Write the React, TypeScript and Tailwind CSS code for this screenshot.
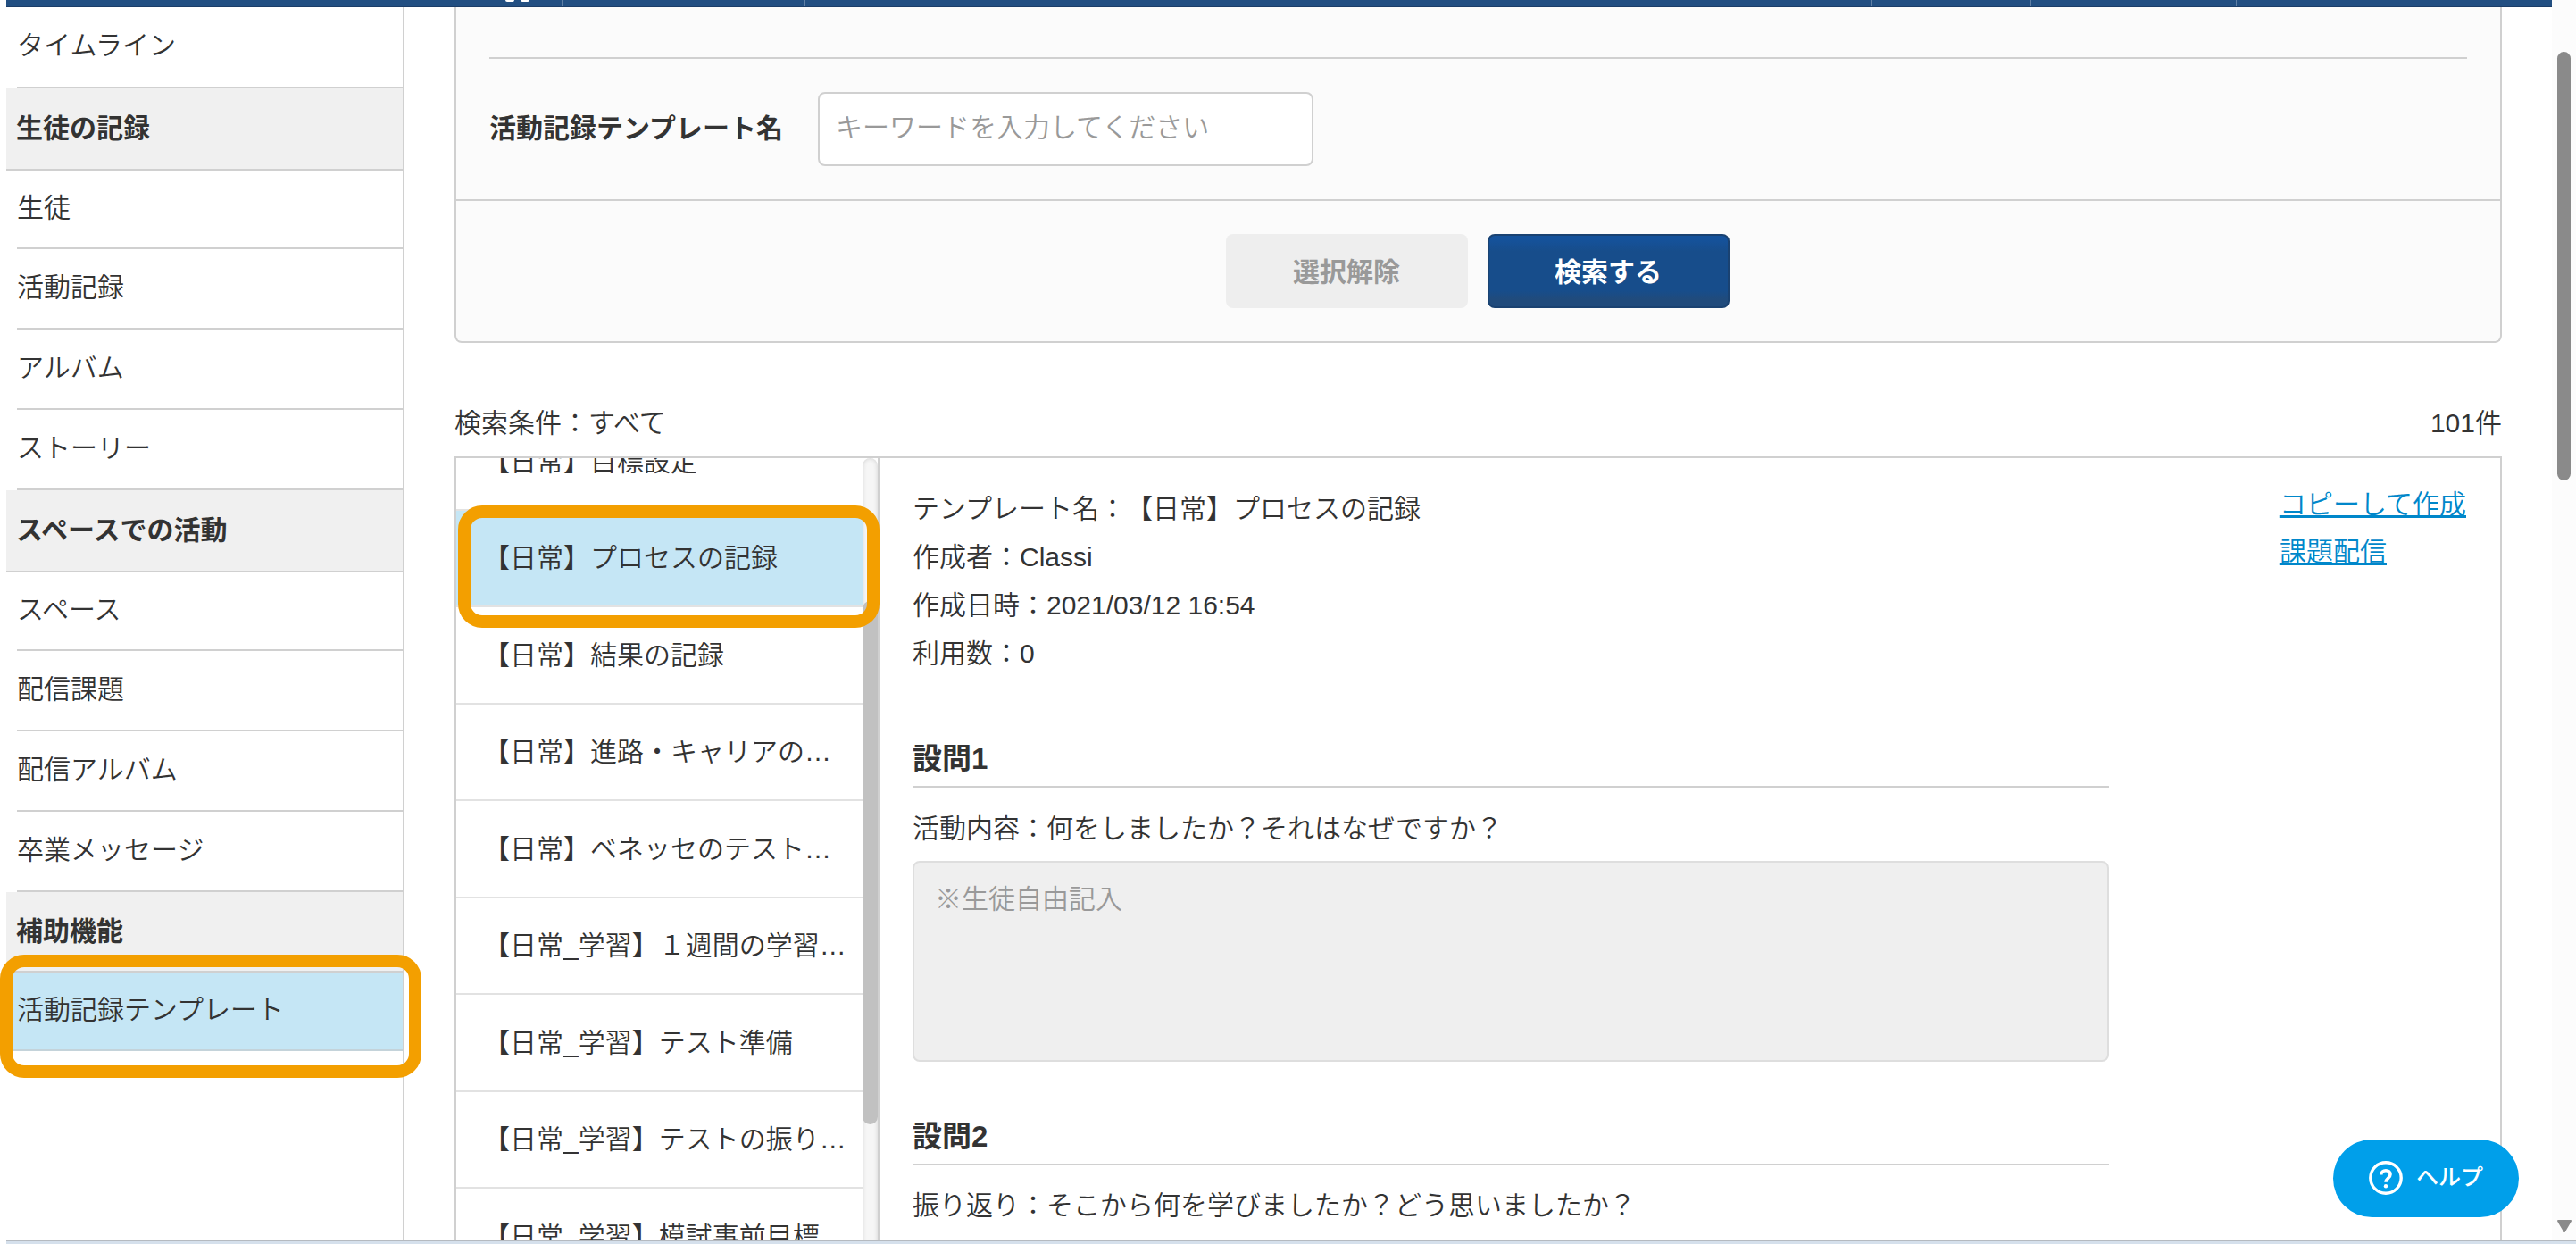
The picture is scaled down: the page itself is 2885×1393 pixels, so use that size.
import React from "react";

type NavItem = {
  label: string;
  kind?: "heading" | "active";
  height: string;
};

const navItems: NavItem[] = [
  { label: "タイムライン", height: "h-[91px]" },
  { label: "生徒の記録", kind: "heading", height: "h-[92px]" },
  { label: "生徒", height: "h-[88px]" },
  { label: "活動記録", height: "h-[90px]" },
  { label: "アルバム", height: "h-[90px]" },
  { label: "ストーリー", height: "h-[90px]" },
  { label: "スペースでの活動", kind: "heading", height: "h-[92px]" },
  { label: "スペース", height: "h-[88px]" },
  { label: "配信課題", height: "h-[90px]" },
  { label: "配信アルバム", height: "h-[90px]" },
  { label: "卒業メッセージ", height: "h-[90px]" },
  { label: "補助機能", kind: "heading", height: "h-[90px]" },
  { label: "活動記録テンプレート", kind: "active", height: "h-[88px]" },
];

const templates = [
  "【日常】目標設定",
  "【日常】プロセスの記録",
  "【日常】結果の記録",
  "【日常】進路・キャリアの…",
  "【日常】ベネッセのテスト…",
  "【日常_学習】１週間の学習…",
  "【日常_学習】テスト準備",
  "【日常_学習】テストの振り…",
  "【日常_学習】模試事前目標",
];

const details = [
  "テンプレート名：【日常】プロセスの記録",
  "作成者：Classi",
  "作成日時：2021/03/12 16:54",
  "利用数：0",
];

const Header = () => (
  <header className="flex h-2 w-[2851px] shrink-0 border-b border-[#1b3d68] bg-[#224f82]">
    <div className="flex w-[623px] justify-end gap-[7px] border-r border-[#5f7fa5] pr-[36px]">
      <span className="h-[2px] w-[10px] rounded-b-full bg-white" />
      <span className="h-[2px] w-[10px] rounded-b-full bg-white" />
    </div>
    <div className="w-[272px] border-r border-[#5f7fa5]" />
    <div className="w-[1194px] border-r border-[#5f7fa5]" />
    <div className="w-[179px] border-r border-[#5f7fa5]" />
    <div className="w-[230px] border-r border-[#5f7fa5]" />
  </header>
);

const Sidebar = () => (
  <nav className="w-[446px] shrink-0 border-r-2 border-[#d0d0d0]">
    {navItems.map((item) => {
      if (item.kind === "heading") {
        return (
          <div
            key={item.label}
            className={`${item.height} flex items-center border-b-2 border-[#d0d0d0] bg-[#f0f0f0] pb-0.5 pl-[11px] font-bold`}
          >
            {item.label}
          </div>
        );
      }
      if (item.kind === "active") {
        return (
          <div
            key={item.label}
            className={`${item.height} flex items-center border-b-2 border-[#c4d3da] bg-[#c5e6f5] pb-[3px] pl-3`}
          >
            {item.label}
          </div>
        );
      }
      return (
        <div key={item.label} className={`${item.height} pl-3`}>
          <div className="flex h-full items-center border-b-2 border-[#d0d0d0] pb-1">
            {item.label}
          </div>
        </div>
      );
    })}
  </nav>
);

const SearchPanel = () => (
  <section className="h-[376px] rounded-b-lg border-2 border-t-0 border-[#d0d0d0] bg-[#fbfbfb]">
    <div className="mx-[37px] h-[58px] border-b-2 border-[#d0d0d0]" />
    <div className="flex h-[159px] items-center border-b-2 border-[#d0d0d0] pl-[37px]">
      <label className="w-[368px] pb-[3px] font-bold">
        活動記録テンプレート名
      </label>
      <input
        className="h-[83px] w-[555px] rounded-lg border-2 border-[#d0d0d0] bg-white px-[18px] pb-1 placeholder:text-[#999] placeholder:opacity-100"
        placeholder="キーワードを入力してください"
      />
    </div>
    <div className="flex justify-center gap-[22px] pt-[37px] pr-[2px]">
      <button className="h-[83px] w-[271px] rounded-lg bg-[#eee] pt-0.5 font-bold text-[#999]">
        選択解除
      </button>
      <button className="h-[83px] w-[271px] rounded-lg border-2 border-[#1a4271] bg-[linear-gradient(to_bottom,#15529b_5%,#174d8b_22%,#174d8b_78%,#204b7c_90%)] pt-0.5 font-bold text-white">
        検索する
      </button>
    </div>
  </section>
);

const TemplateList = () => (
  <div className="flex w-[474px] shrink-0 border-r-2 border-[#d0d0d0]">
    <ul className="-mt-[50px] w-[455px]">
      {templates.map((name, index) => (
        <li
          key={name}
          className={`flex h-[108.5px] items-center border-b-2 border-[#e2e2e2] pl-[30px] whitespace-nowrap ${
            index === 1 ? "bg-[#c5e6f5]" : ""
          }`}
        >
          {name}
        </li>
      ))}
    </ul>
    <div className="h-[890px] w-[17px] rounded-t-full bg-[#f6f6f6] pt-[160px] shadow-[inset_0_0_5px_#d0d0d0]">
      <div className="h-[586px] w-[17px] rounded-full bg-[#c1c1c1]" />
    </div>
  </div>
);

const TemplateDetail = () => (
  <div className="flex grow justify-between pr-[38px] pl-[37px]">
    <div className="w-[1340px]">
      <div className="pt-[30px] leading-[54px]">
        {details.map((line) => (
          <p key={line}>{line}</p>
        ))}
      </div>
      <h3 className="mt-[56px] h-[67px] border-b-2 border-[#d0d0d0] text-[33px] leading-[70px] font-bold">
        設問1
      </h3>
      <p className="pt-5 leading-[52px]">
        活動内容：何をしましたか？それはなぜですか？
      </p>
      <div className="mt-[10px] h-[225px] rounded-lg border-2 border-[#dedede] bg-[#efefef] px-[23px] pt-[17px] leading-[48px] text-[#999]">
        ※生徒自由記入
      </div>
      <h3 className="mt-[49px] h-[67px] border-b-2 border-[#d0d0d0] text-[33px] leading-[69px] font-bold">
        設問2
      </h3>
      <p className="pt-[19px] leading-[52px]">
        振り返り：そこから何を学びましたか？どう思いましたか？
      </p>
    </div>
    <div className="flex flex-col pt-[25px] leading-[53px] text-[#0087ca] underline">
      <a>コピーして作成</a>
      <a>課題配信</a>
    </div>
  </div>
);

const HelpButton = () => (
  <button className="absolute top-[1276px] left-[2613px] flex h-[87px] w-[208px] items-center rounded-full bg-[#009fea] pb-0.5 pl-10 text-[25px] font-medium text-white">
    <svg viewBox="0 0 38 38" className="mr-[15px] size-[38px]" fill="none">
      <circle cx="19" cy="19" r="17.2" stroke="white" strokeWidth="3.4" />
      <path
        d="M13.8 15.5c0-3 2.2-4.8 5.2-4.8s5 1.8 5 4.5c0 4-5 4.4-5 8.6"
        stroke="white"
        strokeWidth="3.6"
      />
      <circle cx="19" cy="28.2" r="2.2" fill="white" />
    </svg>
    ヘルプ
  </button>
);

const App = () => {
  return (
    <div className="relative flex h-[1393px] w-[2885px] overflow-hidden bg-white pl-[7px] font-['Liberation_Sans','Noto_Sans_CJK_JP',sans-serif] text-[30px] leading-[45px] font-[350] text-[#333] [text-spacing-trim:space-all]">
      <div className="flex w-[2851px] shrink-0 flex-col">
        <Header />
        <div className="flex h-[1380px] shrink-0 overflow-hidden">
          <Sidebar />
          <main className="ml-[56px] w-[2293px]">
            <SearchPanel />
            <div className="flex h-[127px] items-end justify-between pb-[15px]">
              <p>検索条件：すべて</p>
              <p>101件</p>
            </div>
            <section className="flex h-[890px] overflow-hidden border-2 border-[#d0d0d0]">
              <TemplateList />
              <TemplateDetail />
            </section>
          </main>
        </div>
        <div className="h-[5px] w-[2878px] shrink-0 border-t-2 border-[#b5bac0] bg-[#d5e0ec]" />
      </div>

      <div className="flex h-[1388px] w-[27px] flex-col items-center justify-between bg-[#fcfcfc] pt-[58px] pb-[7px]">
        <div className="h-[480px] w-[15px] rounded-full bg-[#8a8a8a]" />
        <svg viewBox="0 0 18 15" className="h-[15px] w-[18px]">
          <path
            d="M2 1h14L9 13z"
            fill="#8a8a8a"
            stroke="#8a8a8a"
            strokeWidth="2"
            strokeLinejoin="round"
          />
        </svg>
      </div>

      {/* Callout frames */}
      <div className="absolute top-[566px] left-[513px] h-[137px] w-[472px] rounded-[27px] border-[14px] border-[#f39f00]" />
      <div className="absolute top-[1069px] left-0 h-[138px] w-[472px] rounded-[27px] border-[14px] border-[#f39f00]" />

      <HelpButton />
    </div>
  );
};

export default App;
